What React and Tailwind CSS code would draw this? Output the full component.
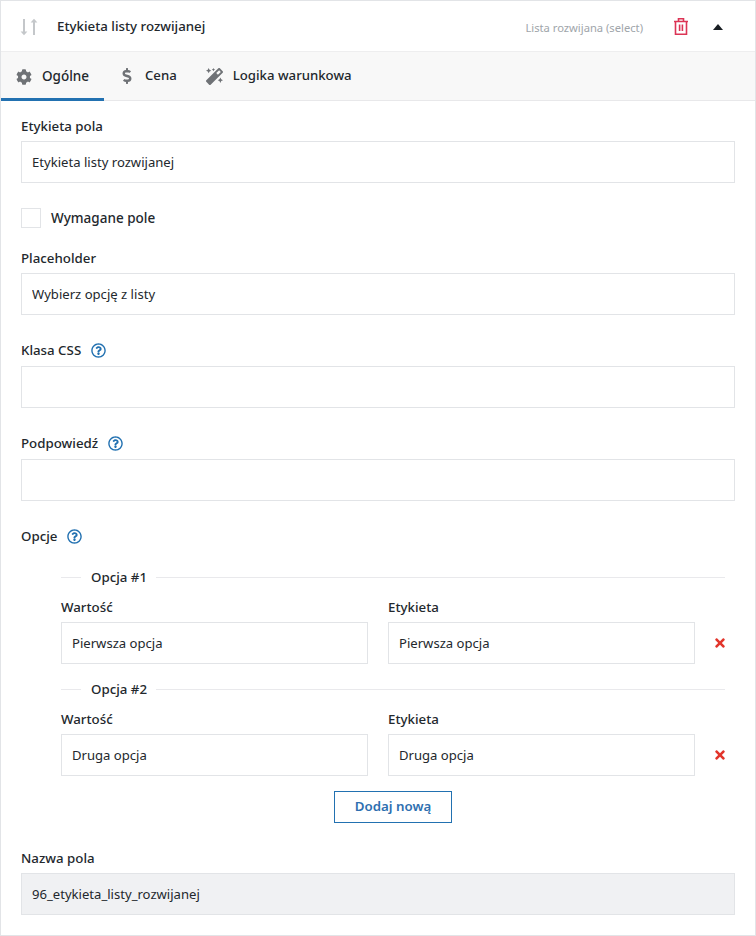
import { FaCog, FaDollarSign, FaMagic, FaTimes, FaRegQuestionCircle } from 'react-icons/fa'

const font = "font-['Noto_Sans',sans-serif]"

const Help = () => <FaRegQuestionCircle size={15} className="text-[#2271b1] ml-[10px] -mt-px" />

const Field = ({ label, help, value, className = '', inputClass = 'bg-white' }) => (
  <div className={className}>
    <div className={`flex items-center text-[13.3px] font-medium text-[#23282d] ${help ? 'h-[20px]' : 'h-[22px]'}`}>
      {label}
      {help && <Help />}
    </div>
    <input
      readOnly
      defaultValue={value}
      className={`block w-full h-[42px] px-[10px] border border-[#e2e4e7] text-[13.1px] text-[#23282d] outline-none ${help ? 'mt-[5px]' : 'mt-[3px]'} ${inputClass}`}
    />
  </div>
)

const Option = ({ num, className = '' }) => (
  <div className={className}>
    <div className="flex items-center h-[22px] pr-[30px] text-[13.3px] font-medium text-[#23282d]">
      <div className="w-[20px] h-px bg-[#e9e9ec] -mt-[2px]" />
      <span className="pl-[10px] pr-[9px]">Opcja #{num}</span>
      <div className="flex-1 h-px bg-[#e9e9ec] -mt-[2px]" />
    </div>
    <div className="flex mt-[8px]">
      <Field label="Wartość" value={num === 1 ? 'Pierwsza opcja' : 'Druga opcja'} className="w-[307px] shrink-0" />
      <Field label="Etykieta" value={num === 1 ? 'Pierwsza opcja' : 'Druga opcja'} className="w-[307px] shrink-0 ml-[20px]" />
      <div className="flex items-center mt-[25px] h-[42px] ml-[18px]">
        <FaTimes size={14} className="text-[#e2352b]" />
      </div>
    </div>
  </div>
)

export default function App() {
  return (
    <div className={`${font} w-[756px] h-[936px] bg-white border border-[#e2e4e7]`}>
      <header className="flex items-center h-[51px] pt-px border-b border-[#eeeeef]">
        <svg width="18" height="18" viewBox="0 0 18 18" className="ml-[19px] text-[#c4c7ca]" fill="currentColor">
          <path d="M3 1h2v12.5h2.4L4 17.2.6 13.5H3zM13 17h2V4.5h2.4L14 .8l-3.4 3.7H13z" />
        </svg>
        <span className="ml-[19px] text-[13.3px] font-medium text-[#23282d]">Etykieta listy rozwijanej</span>
        <span className="ml-auto h-[18px] leading-[20px] text-[11.2px] text-[#a0a5aa]">Lista rozwijana (select)</span>
        <svg width="14" height="17" viewBox="0 0 14 17" className="ml-[31px] text-[#dc3455]" fill="none" stroke="currentColor" strokeWidth="1.6">
          <path d="M0 3.5h14M1.5 3.5v12.7h11V3.5M4.5 3.5V.8h5v2.7M5.6 6.5v6.5M8.4 6.5v6.5" />
        </svg>
        <div className="ml-[25px] mr-[32px] w-0 h-0 border-x-[5.5px] border-x-transparent border-b-[6px] border-b-[#191e23]" />
      </header>
      <nav className="flex h-[49px] bg-[#f8f8f8] border-b border-[#e8e8ea] text-[13.2px] font-medium text-[#23282d]">
        <div className="flex items-center pl-[15px] pt-[3px] w-[103px] h-[49px] border-b-[3px] border-[#2271b1]">
          <FaCog size={16} className="text-[#6f7276]" />
          <span className="ml-[10px] text-[13.5px]">Ogólne</span>
        </div>
        <div className="flex items-center pl-[15px]">
          <FaDollarSign size={16} className="text-[#6f7276]" />
          <span className="ml-[10px]">Cena</span>
        </div>
        <div className="flex items-center pl-[29px]">
          <FaMagic size={17} className="text-[#6f7276]" />
          <span className="ml-[10px]">Logika warunkowa</span>
        </div>
      </nav>
      <main className="px-[20px] pt-[15px]">
        <Field label="Etykieta pola" value="Etykieta listy rozwijanej" />
        <div className="flex items-center mt-[25px] text-[13.5px] font-medium text-[#23282d]">
          <div className="w-[20px] h-[20px] border border-[#e2e4e7] bg-white" />
          <span className="ml-[10px] h-[20px] leading-[20px]">Wymagane pole</span>
        </div>
        <Field label="Placeholder" value="Wybierz opcję z listy" className="mt-[20px]" />
        <Field label="Klasa CSS" help value="" className="mt-[26px]" />
        <Field label="Podpowiedź" help value="" className="mt-[26px]" />
        <div className="flex items-center h-[20px] mt-[26px] text-[13.3px] font-medium text-[#23282d]">
          Opcje
          <Help />
        </div>
        <div className="pl-[40px] mr-[-20px]">
          <Option num={1} className="mt-[20px]" />
          <Option num={2} className="mt-[15px]" />
        </div>
        <div className="flex mt-[15px]">
          <button className="ml-[313px] w-[118px] h-[32px] border border-[#2271b1] text-[13.3px] font-semibold text-[#2e6fb0] bg-white">
            Dodaj nową
          </button>
        </div>
        <Field label="Nazwa pola" value="96_etykieta_listy_rozwijanej" className="mt-[25px]" inputClass="bg-[#f0f1f3]" />
      </main>
    </div>
  )
}
